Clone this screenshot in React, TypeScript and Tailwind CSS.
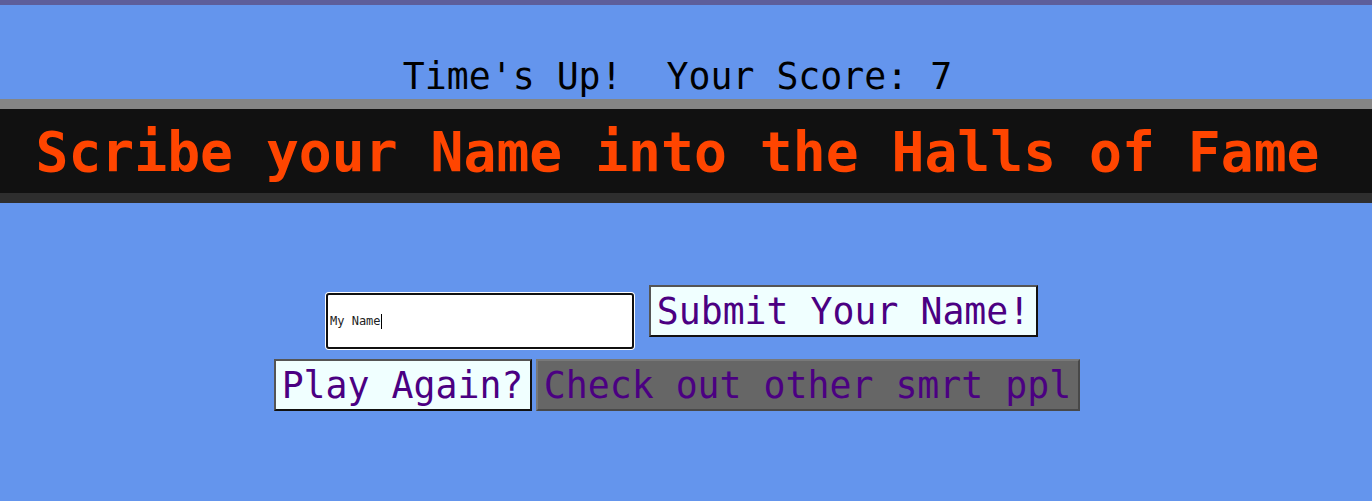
import React from "react";

export default function App() {
  const mono = { fontFamily: '"DejaVu Sans Mono", "Liberation Mono", monospace' };
  return (
    <div className="min-h-[501px] w-full bg-[#6495ed]" style={mono}>
      <div className="h-[5px] bg-[#5d5e9b]" />
      <div className="pr-[17px]">
        <div className="pt-[50px] text-center text-[36.5px] leading-[43px] text-black whitespace-pre">
          {"Time's Up!  Your Score: 7"}
        </div>
      </div>
      <div className="mt-[1px] border-t-[10px] border-b-[10px] border-t-[#858585] border-b-[#2e2e2e] bg-[#111111]">
        <div className="pr-[17px] pt-[11px] pb-[9px]">
          <h1 className="text-center text-[54.7px] leading-[64px] font-bold text-[#ff4500]">
            Scribe your Name into the Halls of Fame
          </h1>
        </div>
      </div>
      <div className="pr-[17px] pt-[82px]">
        <div className="flex justify-center items-start pl-[9px]">
          <div className="mt-[8px] w-[308px] h-[56px] border-2 border-[#101010] rounded-[3px] bg-white shadow-[0_0_0_1px_white] flex items-center pl-[2px] text-[12px] text-[#222]">
            <span>My Name</span>
            <span className="inline-block w-[1px] h-[15px] bg-black" />
          </div>
          <button className="ml-[15px] w-[389px] h-[52px] border-2 border-t-[#555] border-l-[#555] border-b-[#111] border-r-[#111] bg-[#f0ffff] text-[#4b0082] text-[36.5px] leading-[43px] flex items-center justify-center whitespace-pre">
            Submit Your Name!
          </button>
        </div>
        <div className="mt-[10px] flex justify-center items-start gap-[4px] pr-[2px]">
          <button className="w-[258px] h-[52px] border-2 border-t-[#555] border-l-[#555] border-b-[#111] border-r-[#111] bg-[#f0ffff] text-[#4b0082] text-[36.5px] leading-[43px] flex items-center justify-center whitespace-pre">
            Play Again?
          </button>
          <button className="w-[544px] h-[52px] border-2 border-t-[#787878] border-l-[#787878] border-b-[#484848] border-r-[#484848] bg-[#666666] text-[#4b0082] text-[36.5px] leading-[43px] flex items-center justify-center whitespace-pre">
            Check out other smrt ppl
          </button>
        </div>
      </div>
    </div>
  );
}
